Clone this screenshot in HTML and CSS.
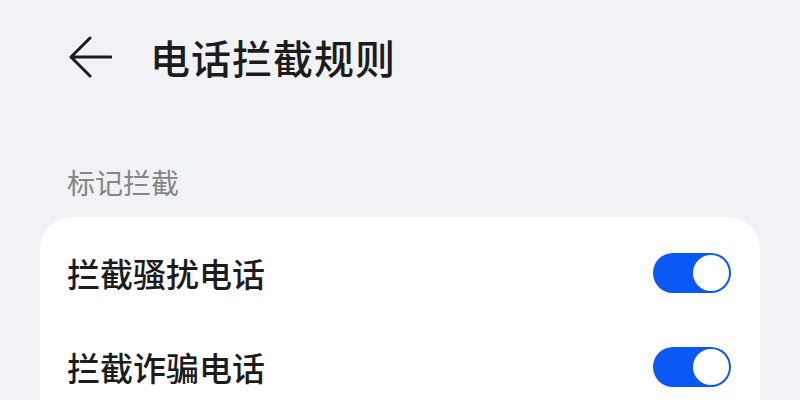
FILE: index.html
```html
<!DOCTYPE html>
<html lang="zh-CN">
<head>
<meta charset="utf-8">
<link rel="stylesheet" href="styles.css">
</head>
<body>
  <header class="header">
    <svg class="back" width="44" height="42" viewBox="0 0 44 42">
      <path d="M43 21H3 M22 2L3 21L22 40" fill="none" stroke="#1c1c1c" stroke-width="3" stroke-linecap="round" stroke-linejoin="round"/>
    </svg>
    <h1 class="title">电话拦截规则</h1>
  </header>
  <div class="section-label">标记拦截</div>
  <div class="card">
    <div class="row">
      <span class="row-text">拦截骚扰电话</span>
      <span class="toggle"><span class="knob"></span></span>
    </div>
    <div class="row">
      <span class="row-text">拦截诈骗电话</span>
      <span class="toggle"><span class="knob"></span></span>
    </div>
  </div>
</body>
</html>
```
FILE: styles.css
```css
html, body {
  margin: 0;
  padding: 0;
  background: #f1f2f6;
  font-family: "Noto Sans CJK SC", "Noto Sans", sans-serif;
  color: #1c1c1c;
  overflow: hidden;
}
.header {
  height: 114px;
  display: flex;
  align-items: center;
  padding-left: 68px;
}
.back {
  display: block;
  flex: none;
}
.title {
  margin: 0 0 0 38px;
  font-size: 40px;
  font-weight: 500;
  line-height: 1;
  letter-spacing: 1px;
}
.section-label {
  margin-top: 50px;
  padding-left: 67px;
  height: 36px;
  line-height: 36px;
  font-size: 28px;
  color: #858585;
}
.card {
  margin: 17px 40px 0 40px;
  background: #ffffff;
  border-radius: 32px 32px 0 0;
  padding: 9px 29px 0 27px;
  height: 183px;
  box-sizing: border-box;
}
.row {
  height: 94px;
  display: flex;
  align-items: center;
  justify-content: space-between;
}
.row-text {
  font-size: 33px;
  font-weight: 500;
  line-height: 1;
}
.toggle {
  width: 78px;
  height: 40px;
  border-radius: 20px;
  background: #0a59f7;
  display: flex;
  justify-content: flex-end;
  align-items: center;
  padding: 0 2px;
  box-sizing: border-box;
}
.knob {
  width: 36px;
  height: 36px;
  border-radius: 50%;
  background: #ffffff;
}
```
